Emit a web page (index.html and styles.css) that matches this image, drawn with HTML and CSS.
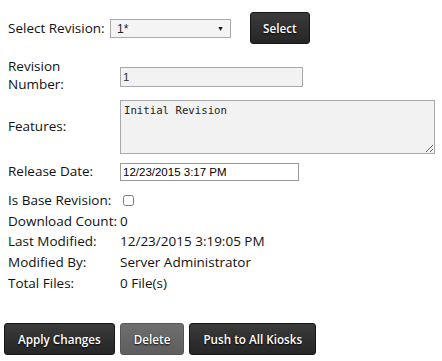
FILE: index.html
```html
<!DOCTYPE html>
<html><head><meta charset="utf-8"/>
<title>Revision</title>
<link rel="stylesheet" href="styles.css">
</head>
<body>

<div class="pick">
  <label class="pick-label">Select Revision:</label>
  <div class="pick-box">
    <select class="pick-select"><option>1*</option></select>
    <span class="arrow">&#9660;</span>
  </div>
  <button class="btn">Select</button>
</div>

<div class="form">
  <label class="lbl two">Revision Number:</label>
  <input class="txt ro num" value="1" readonly>

  <label class="lbl feat">Features:</label>
  <textarea class="area" readonly>Initial Revision</textarea>

  <label class="lbl rel">Release Date:</label>
  <input class="txt date" value="12/23/2015 3:17 PM">

  <span class="lbl row">Is Base Revision:</span>
  <span class="row chk"><input type="checkbox"></span>

  <span class="lbl row">Download Count:</span>
  <span class="row">0</span>

  <span class="lbl row">Last Modified:</span>
  <span class="row">12/23/2015 3:19:05 PM</span>

  <span class="lbl row">Modified By:</span>
  <span class="row">Server Administrator</span>

  <span class="lbl row">Total Files:</span>
  <span class="row">0 File(s)</span>
</div>

<div class="buttons">
  <button class="btn">Apply Changes</button>
  <button class="btn off">Delete</button>
  <button class="btn">Push to All Kiosks</button>
</div>

</body>
</html>
```

FILE: styles.css
```css
body {
  font-family: "Open Sans", sans-serif;
  font-size: 13.5px;
  color: #111;
  margin: 0;
  padding: 12px 8px 0 4px;
  background: #fff;
}
.pick {
  display: flex;
  align-items: center;
  padding-left: 4px;
  height: 32px;
}
.pick-label {
  flex: none;
  width: 102px;
}
.pick-box {
  position: relative;
  flex: none;
  width: 121px;
  height: 19px;
}
.pick-select {
  appearance: none;
  width: 100%;
  height: 100%;
  font: 12px "Liberation Sans", sans-serif;
  color: #222;
  border: 1px solid #a9a9a9;
  background: #f4f4f4;
  padding: 0 6px;
  margin: 0;
}
.arrow {
  position: absolute;
  right: 7px;
  top: 5px;
  font-size: 7px;
  color: #111;
  pointer-events: none;
}
.pick .btn {
  margin-left: 19px;
  padding: 0 12px;
}
.btn {
  font-family: "Open Sans", sans-serif;
  font-size: 11.7px;
  font-weight: 600;
  color: #fff;
  text-shadow: 0 1px 2px #000;
  background: linear-gradient(#3b3b3b, #262626);
  border: 1px solid #151515;
  border-radius: 3px;
  height: 32px;
  padding: 0 13px;
}
.btn.off {
  background: linear-gradient(#6e6e6e, #5e5e5e);
  border-color: #555;
  color: #fff;
}
.form {
  display: grid;
  grid-template-columns: 112px 1fr;
  grid-template-rows: 39px 62px 32px repeat(5, 20.7px);
  align-items: start;
  justify-items: start;
  padding-left: 4px;
  margin-top: 13px;
}
.lbl.two {
  width: 70px;
  line-height: 18px;
}
.lbl.feat {
  line-height: 21px;
  margin-top: 20px;
}
.lbl.rel {
  line-height: 21px;
  margin-top: 3px;
}
.txt {
  font: 11.5px "Liberation Sans", sans-serif;
  border: 1px solid #a9a9a9;
  padding: 1px 2px;
  box-sizing: border-box;
  display: block;
}
.ro {
  background: #f2f2f2;
  color: #333;
}
.num {
  width: 183px;
  height: 20px;
  margin-top: 10px;
}
.date {
  width: 179px;
  height: 18px;
  margin-top: 5px;
  border-color: #9a9a9a;
  color: #000;
}
.area {
  display: block;
  box-sizing: border-box;
  width: 315px;
  height: 54px;
  margin-top: 4px;
  font: 10.7px "DejaVu Sans Mono", monospace;
  background: #f2f2f2;
  border: 1px solid #a9a9a9;
  padding: 3px 3px;
  color: #222;
  resize: vertical;
}
.row {
  line-height: 20.7px;
}
.chk input {
  margin: 0 0 0 3px;
  width: 11px;
  height: 11px;
  vertical-align: -1px;
}
.buttons {
  display: flex;
  gap: 5px;
  margin-top: 30px;
}
```
